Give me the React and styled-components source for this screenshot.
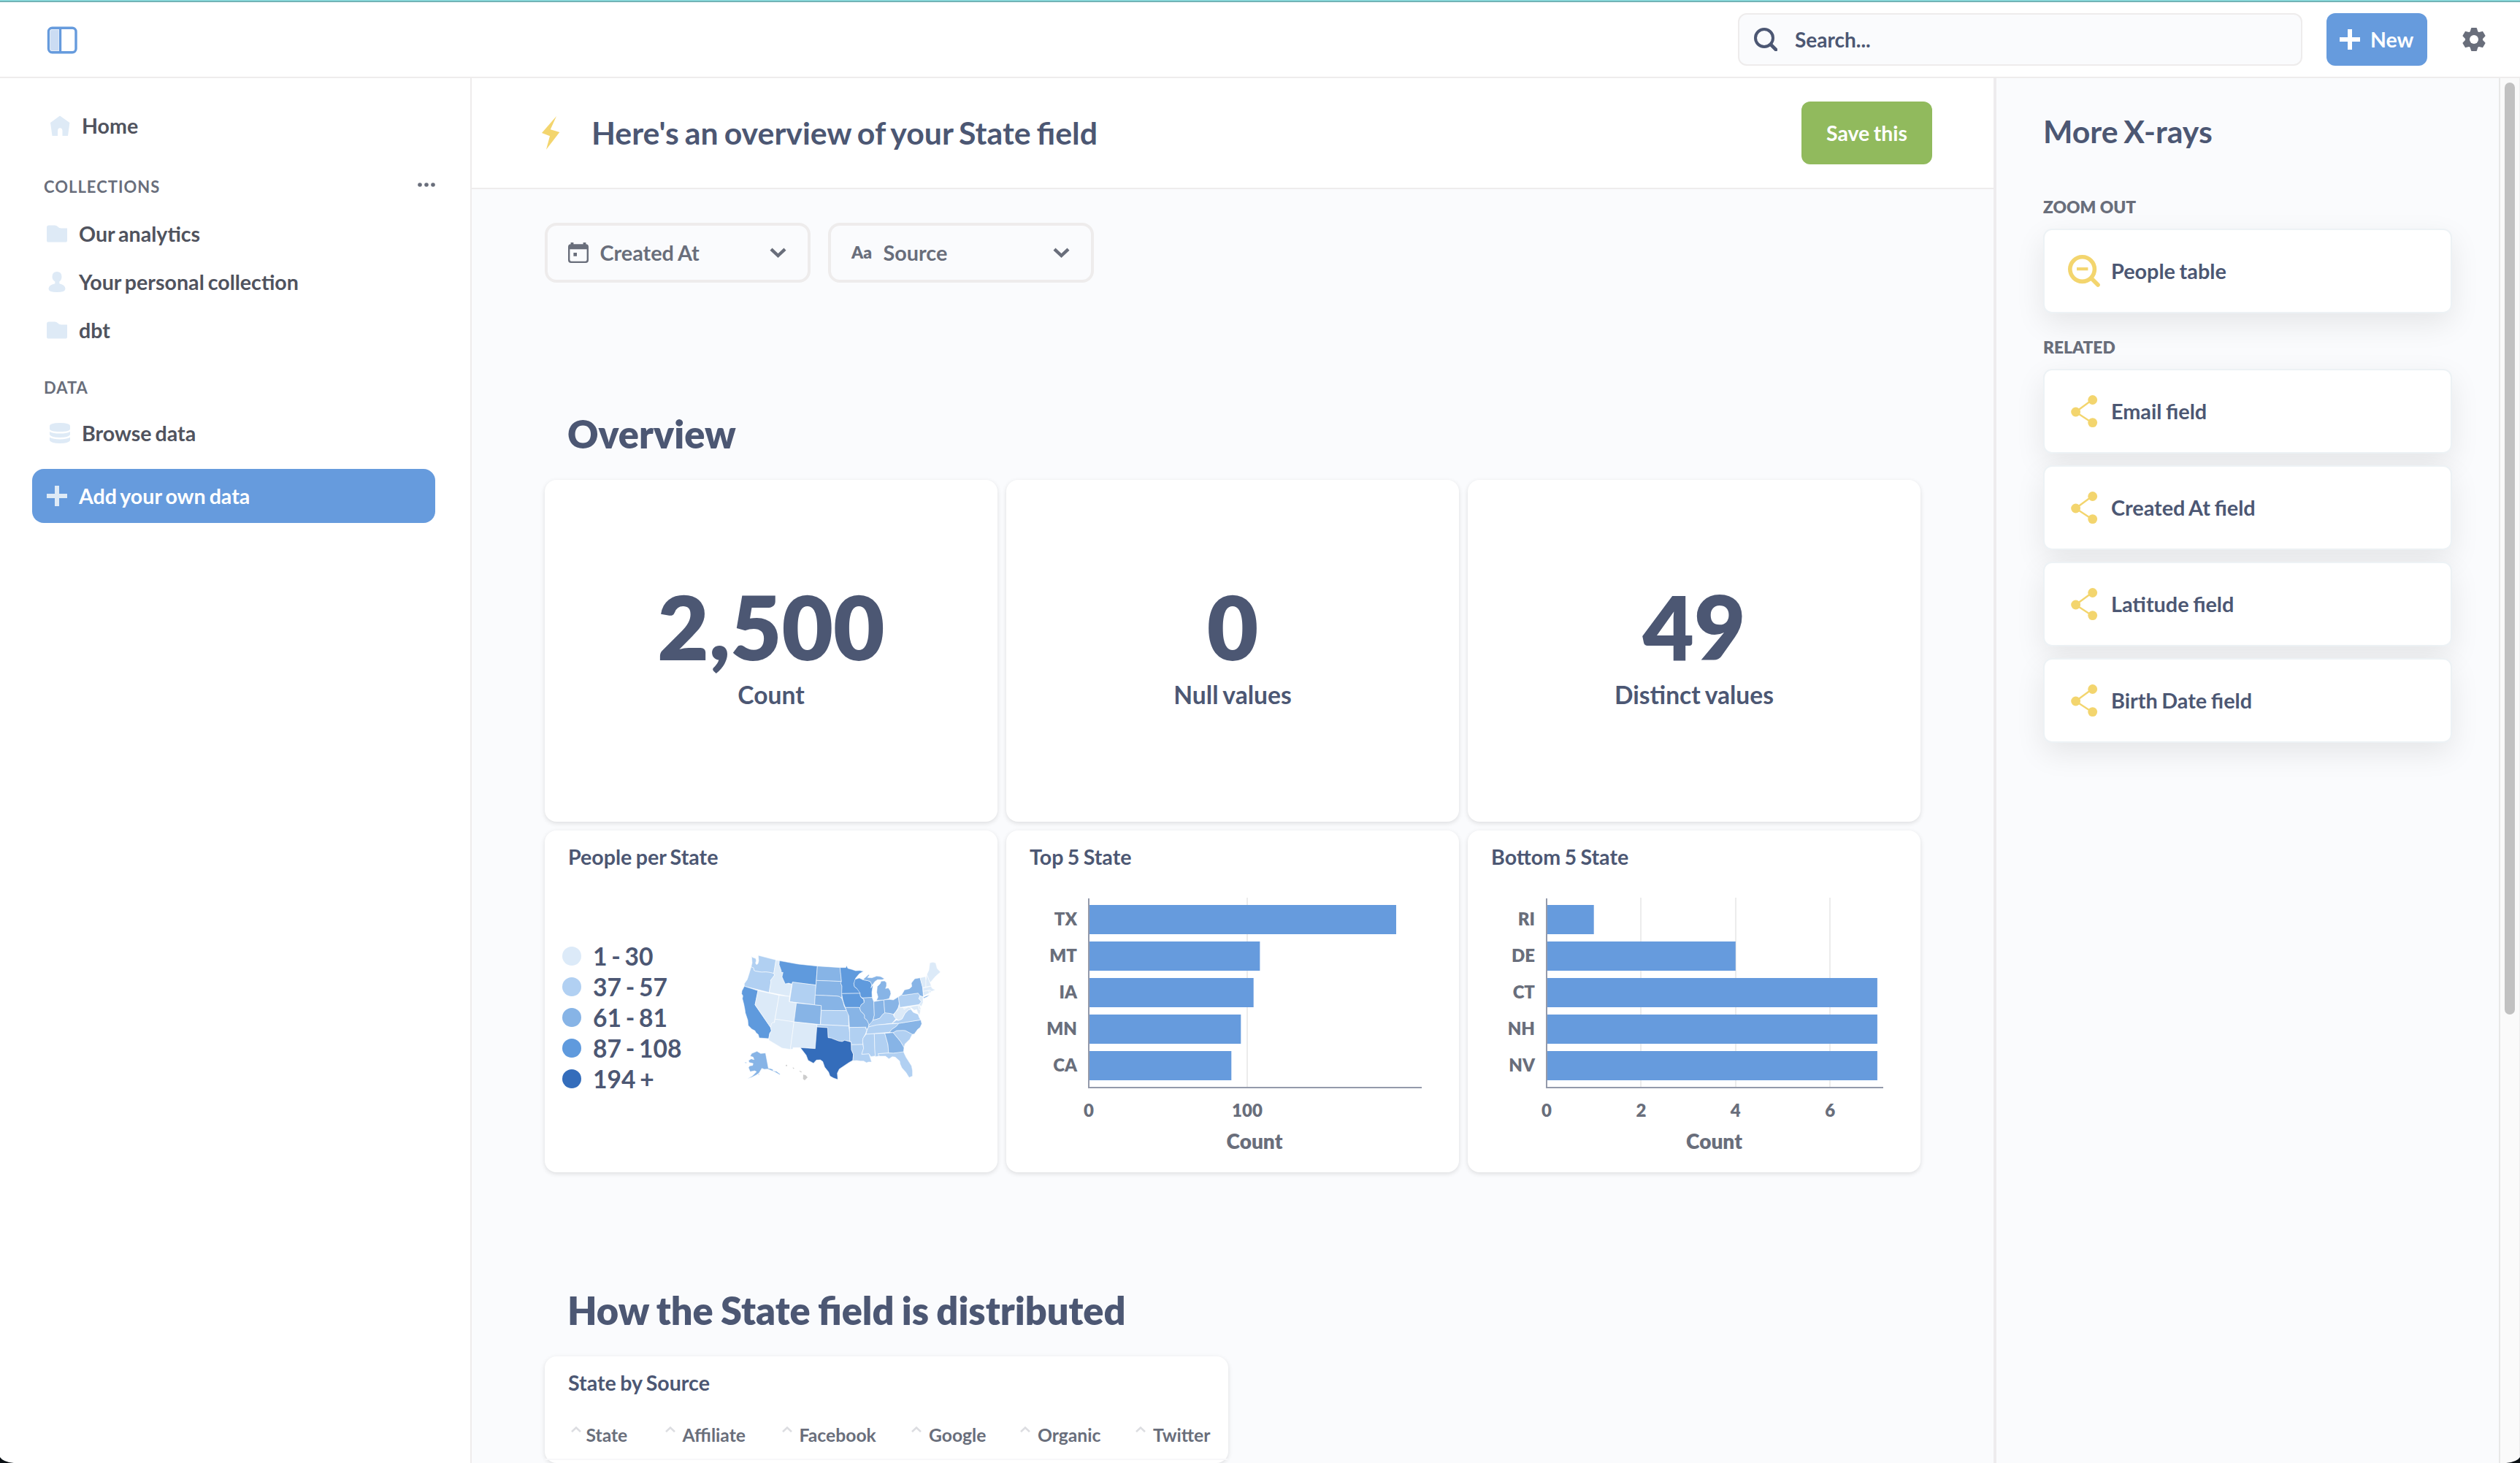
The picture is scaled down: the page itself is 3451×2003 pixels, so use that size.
import React from "react";
import styled, { createGlobalStyle } from "styled-components";

const color = {
  brand: "#669bdd",
  dark: "#4c5773",
  nav: "#50535e",
  medium: "#696e7b",
  pale: "#deeaf6",
  border: "#eeecec",
  bg: "#fafbfd",
  green: "#91ba5d",
  yellow: "#f3d56e",
  axis: "#949aab",
};

const GlobalStyle = createGlobalStyle`
  * { box-sizing: border-box; }
  html, body { margin: 0; height: 100%; overflow: hidden; background: #fff; }
  body { font-family: Lato, "Liberation Sans", sans-serif; font-size: 28px; font-weight: 700; color: ${color.dark}; }
  svg { display: block; flex: none; }
`;

/* ---------- shell ---------- */
const Page = styled.div`
  display: flex;
  flex-direction: column;
  height: 100vh;
`;
const TopStrip = styled.div`
  flex: none;
  height: 3px;
  border-top: 1px solid #8de5e6;
  background: #72b3b6;
`;
const AppBar = styled.header`
  flex: none;
  display: flex;
  align-items: center;
  justify-content: space-between;
  height: 104px;
  padding: 0 47px 0 64px;
  border-bottom: 2px solid ${color.border};
`;
const AppBarTools = styled.div`
  display: flex;
  align-items: center;
`;
const SearchBox = styled.div`
  display: flex;
  align-items: center;
  gap: 24px;
  width: 773px;
  height: 72px;
  padding: 0 20px 0 20px;
  border: 2px solid ${color.border};
  border-radius: 12px;
  background: ${color.bg};
  line-height: 34px;
`;
const NewButton = styled.button`
  display: flex;
  align-items: center;
  gap: 14px;
  width: 138px;
  height: 72px;
  margin: 0 48px 0 33px;
  padding: 0 0 0 18px;
  border: 0;
  border-radius: 12px;
  background: ${color.brand};
  color: #fff;
  font: inherit;
  font-size: 28.4px;
`;
const Body = styled.div`
  flex: 1;
  min-height: 0;
  display: flex;
`;

/* ---------- sidebar ---------- */
const Sidebar = styled.nav`
  flex: none;
  width: 646px;
  padding: 32px 48px 0 44px;
  border-right: 2px solid ${color.border};
  color: ${color.nav};
`;
const NavItem = styled.div`
  display: flex;
  align-items: center;
  gap: 16px;
  height: 66px;
  padding-left: ${(p) => (p.$root ? 24 : 20)}px;
  font-size: 28.6px;
  word-spacing: -2px;
`;
const NavHeading = styled.div`
  display: flex;
  align-items: center;
  justify-content: space-between;
  height: 28px;
  margin: ${(p) => p.$margin};
  padding-left: 16px;
  color: ${color.medium};
  font-size: 22px;
  letter-spacing: 1px;
  svg { margin-bottom: 4px; }
`;
const AddData = styled(NavItem)`
  height: 74px;
  width: 552px;
  margin-top: 16px;
  border-radius: 16px;
  background: ${color.brand};
  color: #fff;
`;

/* ---------- main ---------- */
const Main = styled.main`
  flex: none;
  width: 2084px;
  display: flex;
  flex-direction: column;
  background: ${color.bg};
`;
const XrayHeader = styled.div`
  flex: none;
  display: flex;
  align-items: center;
  height: 152px;
  padding: 0 84px 0 96px;
  border-bottom: 2px solid ${color.border};
  background: #fff;
`;
const Title = styled.h1`
  flex: 1;
  margin: 0 0 0 43px;
  padding-bottom: 2px;
  font-size: 42.8px;
  word-spacing: -2.4px;
  font-weight: 700;
`;
const SaveButton = styled.button`
  width: 179px;
  height: 86px;
  padding: 0;
  border: 0;
  border-radius: 12px;
  background: ${color.green};
  color: #fff;
  font: inherit;
  font-size: 28.4px;
  word-spacing: -1.5px;
`;
const Filters = styled.div`
  display: flex;
  gap: 24px;
  padding: 46px 0 0 100px;
`;
const Filter = styled.div`
  display: flex;
  align-items: center;
  width: 364px;
  height: 82px;
  padding: 0 29px 0 28px;
  border: 4px solid ${color.border};
  border-radius: 16px;
  color: ${color.medium};
  font-size: 28.8px;
  word-spacing: -1px;
  span { flex: 1; margin-left: 15.5px; }
`;
const TypeGlyph = styled.b`
  font-size: 22.8px;
  font-weight: 800;
  width: 28px;
  line-height: 24px;
  margin-bottom: 2px;
`;
const SectionTitle = styled.h2`
  margin: ${(p) => p.$top}px 0 0 131px;
  height: 64px;
  font-size: 52.3px;
  word-spacing: -1.8px;
  line-height: 64px;
  font-weight: 800;
`;
const CardGrid = styled.div`
  display: grid;
  grid-template-columns: repeat(3, 620px);
  grid-auto-rows: 468px;
  gap: 12px;
  margin: 31px 0 0 100px;
`;
const Card = styled.section`
  border-radius: 16px;
  background: #fff;
  box-shadow: 0 2px 6px rgba(0, 0, 0, 0.12);
`;
const CardTitle = styled.h3`
  margin: 0;
  padding: 16px 0 0 32px;
  font-size: 28.6px;
  word-spacing: -1.6px;
  line-height: 40px;
  font-weight: 700;
`;
const ScalarCard = styled(Card)`
  display: flex;
  flex-direction: column;
  align-items: center;
  padding-top: 139px;
`;
const ScalarValue = styled.div`
  font-size: 121.6px;
  line-height: 122px;
  font-weight: 800;
`;
const ScalarLabel = styled.div`
  margin-top: 13px;
  font-size: 33.6px;
  word-spacing: -1.5px;
  line-height: 40px;
`;
const MapBody = styled.div`
  display: flex;
  padding: 87px 0 0 24px;
`;
const Legend = styled.ul`
  width: 220px;
  margin: 8px 0 0;
  padding: 0;
  list-style: none;
  font-size: 33.6px;
  word-spacing: -2.4px;
`;
const LegendRow = styled.li`
  display: flex;
  align-items: center;
  gap: 16px;
  height: 42px;
  white-space: nowrap;
  &::before {
    content: "";
    width: 26px;
    height: 26px;
    border-radius: 50%;
    background: ${(p) => p.$fill};
  }
`;
const TableCard = styled(Card)`
  width: 936px;
  height: 600px;
  margin: 31px 0 0 100px;
`;
const HeaderRow = styled.div`
  display: grid;
  grid-template-columns: 128.5px 160px 177.5px 149px 158px 1fr;
  align-items: center;
  height: 68px;
  margin-top: 18px;
  padding-left: 36px;
  border-bottom: 2px solid #f7f7f9;
  color: ${color.medium};
  font-size: 24.7px;
`;
const HeaderCell = styled.div`
  display: flex;
  align-items: center;
  gap: ${(p) => p.$gap}px;
  svg { margin-bottom: 15px; }
`;

/* ---------- right panel ---------- */
const XrayPanel = styled.aside`
  flex: none;
  width: 692px;
  padding: 42px 64px 0;
  border-left: 4px solid #eeecee;
  background: ${color.bg};
`;
const PanelTitle = styled.h2`
  margin: 0;
  font-size: 42.8px;
  word-spacing: -2.6px;
  line-height: 62px;
  font-weight: 700;
`;
const PanelHeading = styled.h3`
  margin: ${(p) => p.$margin};
  color: ${color.medium};
  font-size: 22.75px;
  line-height: 28px;
  font-weight: 800;
`;
const XrayLink = styled.div`
  display: flex;
  align-items: center;
  gap: 15px;
  height: 116px;
  margin-bottom: 16px;
  padding-left: 32px;
  border: 2px solid #edf2f5;
  border-radius: 12px;
  background: #fff;
  box-shadow: 0 14px 40px rgba(0, 0, 0, 0.085);
  font-size: 28.8px;
  word-spacing: -1.4px;
`;
const ScrollTrack = styled.div`
  flex: 1;
  border-left: 2px solid #e8e8e8;
  border-right: 1px solid #ededed;
  background: #fafafa;
  padding: 6px 0 0 6px;
`;
const ScrollThumb = styled.div`
  width: 14px;
  height: 1276px;
  border-radius: 7px;
  background: #c1c1c1;
`;
const Corner = styled.svg`
  position: fixed;
  bottom: 0;
  ${(p) => (p.$right ? "right: 0; transform: scaleX(-1);" : "left: 0;")}
`;

/* ---------- icons ---------- */
const SidebarIcon = () => (
  <svg width="42" height="40" viewBox="0 -2 42 40">
    <rect x="2.5" y="2.2" width="37.5" height="33.6" rx="5" fill="#fff" stroke={color.brand} strokeWidth="3.4" />
    <path d="M8 4.6H16V33.4H8Q5 33.4 5 30.4V7.6Q5 4.600 8 4.600Z" fill="#cbdcf3" />
    <path d="M18.500 3V35" stroke={color.brand} strokeWidth="3.4" />
  </svg>
);
const SearchIcon = () => (
  <svg width="32" height="32" viewBox="0 0 32 32" fill="none" stroke={color.dark}>
    <circle cx="14" cy="14" r="12" strokeWidth="4" />
    <path d="M23 23L30 30" strokeWidth="4.600" strokeLinecap="round" />
  </svg>
);
const PlusIcon = ({ fill = "#fff" }) => (
  <svg width="28" height="28" viewBox="0 0 28 28" fill={fill}>
    <path d="M11 0h6v11h11v6H17v11h-6V17H0v-6h11z" />
  </svg>
);
const GearIcon = () => (
  <svg width="32" height="32" viewBox="-16 -16 32 32">
    <g fill={color.medium}>
      <circle r="12" />
      {[0, 60, 120, 180, 240, 300].map((a) => (
        <path key={a} transform={`rotate(${a})`} d="M-5.500 -10L-4 -15.200Q-3.900 -16 -3 -16H3Q3.900 -16 4 -15.200L5.500 -10Z" />
      ))}
    </g>
    <circle r="6" fill="#fff" />
  </svg>
);
const HomeIcon = () => (
  <svg width="28" height="28" viewBox="0 0 28 28" fill={color.pale}>
    <path d="M14 .4L27.400 10L25 28H17.500V21.500Q17.500 17.200 14.300 17.200Q11 17.200 11 21.500V28H3.500L1 10Z" />
  </svg>
);
const FolderIcon = () => (
  <svg width="28" height="28" viewBox="0 0 28 28" fill={color.pale}>
    <path d="M3 2.600H11Q13.500 2.600 15 4.200Q17 6.400 20 6.400H28V23Q28 25.600 25.500 25.600H2.500Q0 25.600 0 23V5.600Q0 2.600 3 2.600Z" />
  </svg>
);
const PersonIcon = () => (
  <svg width="28" height="28" viewBox="0 0 28 28" fill={color.pale}>
    <path d="M14 0Q20.500 0 20.500 7Q20.500 11 17.300 13.500V16.200Q25.500 18 25.500 23.500Q25.500 28 14 28Q2.500 28 2.500 23.500Q2.500 18 11.400 16.200V13.500Q7.500 11 7.500 7Q7.500 0 14 0Z" />
  </svg>
);
const DatabaseIcon = () => (
  <svg width="28" height="28" viewBox="0 0 28 28" fill={color.pale}>
    <path d="M0 4.500Q0 0 14 0Q28 0 28 4.500V8Q28 12 14 12Q0 12 0 8Z" />
    <path d="M0 12Q5 14.600 14 14.600Q23 14.600 28 12V16Q26 20 14 20Q2 20 0 16Z" />
    <path d="M0 19.800Q5 22.400 14 22.400Q23 22.400 28 19.800V24Q26 28 14 28Q2 28 0 24Z" />
  </svg>
);
const DotsIcon = () => (
  <svg width="24" height="6" viewBox="0 0 24 6" fill={color.medium}>
    <circle cx="3" cy="3" r="2.800" />
    <circle cx="12" cy="3" r="2.800" />
    <circle cx="21" cy="3" r="2.800" />
  </svg>
);
const BoltIcon = () => (
  <svg width="25" height="46" viewBox="0 0 25 46" fill={color.yellow}>
    <path d="M20 0L11.800 18.300L24.300 22L6 45.700L11 27.300L0 23Z" />
  </svg>
);
const CalendarIcon = () => (
  <svg width="28" height="28" viewBox="0 0 28 28">
    <path fillRule="evenodd" fill={color.medium} d="M3.600 0H7.400V2.200H20.600V0H24.400V2.200Q28 2.400 28 6V24Q28 28 24 28H4Q0 28 0 24V6Q0 2.400 3.600 2.200ZM2.400 9.200V23.600Q2.400 25.800 4.600 25.800H23.400Q25.600 25.800 25.600 23.600V9.200ZM7.400 14H12V18.800H7.400Z" />
  </svg>
);
const ChevronIcon = () => (
  <svg width="23" height="14" viewBox="0 0 23 14" fill="none" stroke={color.medium} strokeWidth="4.400">
    <path d="M2 2.200L11.500 11L21 2.200" />
  </svg>
);
const ZoomOutIcon = () => (
  <svg width="44" height="44" viewBox="0 0 44 44" fill="none" stroke={color.yellow}>
    <circle cx="19.600" cy="19.600" r="16.800" strokeWidth="5.600" />
    <path d="M12 19.200H27.400" strokeWidth="4.200" />
    <path d="M33.500 33.500L41 41" strokeWidth="5.600" strokeLinecap="round" />
  </svg>
);
const ShareIcon = () => (
  <svg width="44" height="44" viewBox="0 0 44 44" fill={color.yellow}>
    <path d="M33 6.500L10.500 23L33 37.800" fill="none" stroke={color.yellow} strokeWidth="2.400" />
    <circle cx="33.700" cy="6.500" r="6.400" />
    <circle cx="10.600" cy="23" r="6.400" />
    <circle cx="33.700" cy="37.600" r="6.400" />
  </svg>
);
const SortIcon = () => (
  <svg width="14" height="8" viewBox="0 0 14 8" fill="none" stroke="#dcdde1" strokeWidth="2.600">
    <path d="M1 7.200L7 1.600L13 7.200" />
  </svg>
);

/* ---------- choropleth ---------- */
const scale = ["#dceaf8", "#b1d0f2", "#87b4e6", "#5f9add", "#346dbb"];
const states = [
  [2, "118,88 122,92 135,97 137,106 134,116 138,122 144,118 147,106 145,84 218,103 209,158 192,154 175,152 160,153 134,149 128,146 126,136 116,131 120,115"],
  [2, "116,131 126,136 128,146 134,149 160,153 175,152 192,154 209,158 212,165 204,176 196,186 197,195 190,236 88,211 88,200 100,183 108,158"],
  [4, "88,211 144,229 132,287 196,380 199,394 192,405 188,426 149,423 145,409 136,402 132,394 118,386 104,372 102,350 92,320 90,305 86,285 80,262 82,250 77,242 78,230"],
  [1, "144,229 231,248 213,348 212,360 204,360 200,364 197,382 132,287"],
  [1, "218,103 232,106 231,122 240,148 239,153 247,154 243,168 248,184 256,199 283,202 274,253 190,236 197,195 196,186 204,176 212,165 209,158"],
  [4, "232,106 310,120 388,128 382,206 286,194 283,202 270,198 256,201 248,184 243,172 247,154 239,153 240,148 231,122"],
  [2, "286,194 382,206 377,287 274,274"],
  [1, "231,248 274,253 272,274 302,280 292,357 214,346"],
  [3, "302,280 404,290 400,368 292,357"],
  [1, "214,346 292,357 277,470 243,465 188,432 192,405 199,394 196,380 200,364 204,360 212,360"],
  [1, "292,357 387,368 379,467 320,463 288,463 288,469 277,470"],
  [3, "388,128 481,134 484,160 487,191 384,187"],
  [3, "384,187 487,191 485,200 489,210 489,240 488,260 478,253 466,251 379,247"],
  [3, "379,247 466,251 478,253 488,260 494,275 498,292 508,311 404,310 404,290 377,287"],
  [2, "404,310 508,311 515,320 516,332 517,374 401,368"],
  [2, "387,368 517,374 521,405 522,437 500,433 490,438 476,436 460,430 445,424 432,422 430,381 386,378"],
  [5, "386,378 430,381 432,422 445,424 460,430 476,436 490,438 500,433 527,440 528,472 536,490 534,515 518,524 500,536 478,551 470,568 472,594 455,588 440,580 434,563 418,543 410,520 400,513 384,514 372,527 350,515 342,494 318,463 379,467"],
  [4, "481,134 505,134 508,125 513,137 530,142 545,147 562,146 578,149 560,160 545,178 543,190 538,200 540,212 550,220 562,230 563,240 488,241 489,210 484,198 487,191"],
  [4, "488,241 563,240 566,255 578,265 580,278 568,287 566,296 562,300 558,298 503,298 498,285 492,265"],
  [3, "503,298 558,298 562,300 566,313 576,322 582,330 582,342 592,350 600,366 598,378 594,386 586,386 588,379 520,380 517,332 508,311"],
  [2, "520,380 588,379 586,386 592,388 586,406 576,424 574,436 575,450 528,451 526,438 521,437"],
  [2, "528,451 575,450 578,466 570,490 600,488 604,500 611,522 598,522 590,525 578,518 565,518 550,516 534,517 536,490 528,472"],
  [4, "543,182 560,177 575,184 596,188 606,192 612,204 608,218 617,204 612,235 613,257 573,259 565,252 563,238 550,220 540,212 538,200"],
  [3, "573,259 613,257 620,275 622,330 617,348 610,364 600,368 592,350 582,342 582,330 576,322 566,313 562,300 568,287 580,278 580,266"],
  [3, "620,274 661,267 665,320 655,328 645,342 630,347 617,350 622,330"],
  [3, "575,184 598,163 602,165 594,175 612,176 632,169 648,171 664,180 655,184 635,184 624,192 617,202 612,206 606,192 596,188"],
  [3, "631,269 637,255 632,236 634,212 646,200 650,190 664,189 672,196 672,210 668,220 680,218 688,230 690,242 683,262 661,267"],
  [3, "661,267 684,265 700,267 721,254 725,285 720,300 708,318 700,326 682,322 672,322 665,320"],
  [2, "617,350 630,347 645,342 655,328 665,320 682,322 700,326 702,334 712,343 695,363 632,370 598,378 600,370"],
  [2, "598,378 632,370 723,363 712,376 694,388 684,400 588,408 592,392"],
  [2, "588,408 622,406 624,470 626,497 608,500 600,488 570,490 578,466 574,436 576,424"],
  [2, "622,406 665,404 678,450 681,485 638,488 642,497 626,500 624,470"],
  [3, "665,404 699,401 710,414 730,438 744,462 742,482 700,486 681,485 678,450"],
  [2, "638,488 681,485 700,486 742,480 752,502 775,538 779,558 779,580 765,586 752,565 735,546 728,530 726,518 708,502 696,500 682,509 668,498 642,498"],
  [2, "699,401 714,393 740,392 750,393 778,408 768,428 748,448 744,462 730,438 710,414"],
  [3, "723,363 813,349 817,365 810,380 800,388 786,407 778,408 750,393 740,392 714,393 699,401 684,400 694,388 712,376"],
  [2, "695,363 712,350 722,351 736,345 748,322 762,308 772,305 782,318 802,326 806,338 812,349 723,363"],
  [1, "724,284 727,298 744,299 744,306 760,296 772,298 772,305 762,308 748,322 736,345 722,351 708,342 703,334 704,322 718,308"],
  [1, "744,299 803,289 806,306 812,308 808,330 800,318 796,306 786,310 772,298 760,296 744,306"],
  [2, "721,254 735,245 738,248 802,239 810,248 805,262 816,274 806,286 727,298"],
  [3, "735,245 746,226 766,221 776,212 774,198 788,180 810,176 820,212 823,248 822,254 810,250 802,239 738,248"],
  [3, "822,257 834,251 850,246 838,255 826,260"],
  [1, "810,250 822,256 822,278 815,294 806,286 816,274 805,262"],
  [1, "803,289 807,288 814,306 806,306"],
  [1, "810,176 832,171 834,186 834,214 821,217"],
  [1, "838,162 856,209 834,214 834,186"],
  [1, "838,162 846,145 850,115 862,112 874,115 880,138 894,152 872,172 860,186 852,196 846,184"],
  [1, "822,218 855,211 860,220 873,226 858,232 848,227 823,232"],
  [1, "823,232 846,228 848,239 825,250"],
  [1, "846,228 852,227 856,234 848,239"],
  [3, "140,478 155,487 175,485 187,548 196,549 206,553 206,558 220,560 236,572 232,574 214,563 196,556 184,551 170,552 160,548 154,558 148,568 136,576 120,584 100,591 122,578 138,562 130,558 112,562 105,545 110,538 122,536 124,528 108,524 105,516 116,509 128,512 124,502 112,498 118,487"],
  [3, "144,572 150,570 148,577"],
  [3, "88,524 96,522 97,528"],
];
const UsMap = () => (
  <svg width="320" height="220" viewBox="0 0 960 660">
    <g stroke="#fff" strokeOpacity=".75" strokeWidth="2.200" strokeLinejoin="round">
      {states.map(([level, points], i) => (
        <polygon key={i} points={points} fill={scale[level - 1]} />
      ))}
    </g>
    <g fill="#cccccc">
      <polygon points="330,574 340,576 348,585 336,597 329,592" />
      <polygon points="314,557 324,562 322,565 316,562" />
      <polygon points="287,543 294,549 288,550" />
      <circle cx="261" cy="536" r="3" />
    </g>
  </svg>
);

/* ---------- bar charts ---------- */
const ChartText = styled.text`
  fill: ${color.medium};
  font-size: ${(p) => p.$size || 24}px;
  font-weight: 800;
  text-anchor: ${(p) => p.$anchor || "middle"};
`;
const BarChart = ({ x0, x1, unit, ticks, rows }) => (
  <svg width="620" height="412" viewBox="0 56 620 412">
    {ticks.slice(1).map((t) => (
      <rect key={t} x={Math.round(x0 + t * unit) - 1} y="92" width="2" height="259" fill="#ececec" />
    ))}
    {rows.map(([label, value], i) => (
      <React.Fragment key={label}>
        <rect x={x0} y={102 + i * 50} width={value * unit} height="40" fill={color.brand} />
        <ChartText $anchor="end" x={x0 - 16} y={130 + i * 50}>{label}</ChartText>
      </React.Fragment>
    ))}
    <path d={`M${x0} 93V352H${x1}`} fill="none" stroke={color.axis} strokeWidth="2" />
    {ticks.map((t) => (
      <ChartText key={t} x={x0 + t * unit} y="392">{t}</ChartText>
    ))}
    <ChartText $size={28} x={(x0 + x1) / 2 - 1} y="436">Count</ChartText>
  </svg>
);

const scalars = [["2,500", "Count"], ["0", "Null values"], ["49", "Distinct values"]];
const legend = ["1 - 30", "37 - 57", "61 - 81", "87 - 108", "194 +"];
const related = ["Email field", "Created At field", "Latitude field", "Birth Date field"];
const columns = ["State", "Affiliate", "Facebook", "Google", "Organic", "Twitter"];

export default function App() {
  return (
    <Page>
      <GlobalStyle />
      <TopStrip />
      <AppBar>
        <SidebarIcon />
        <AppBarTools>
          <SearchBox>
            <SearchIcon />
            <span>Search...</span>
          </SearchBox>
          <NewButton>
            <PlusIcon />
            New
          </NewButton>
          <GearIcon />
        </AppBarTools>
      </AppBar>
      <Body>
        <Sidebar>
          <NavItem $root><HomeIcon />Home</NavItem>
          <NavHeading $margin="36px 0 18px">COLLECTIONS<DotsIcon /></NavHeading>
          <NavItem><FolderIcon />Our analytics</NavItem>
          <NavItem><PersonIcon />Your personal collection</NavItem>
          <NavItem><FolderIcon />dbt</NavItem>
          <NavHeading $margin="31px 0 16px">DATA</NavHeading>
          <NavItem $root><DatabaseIcon />Browse data</NavItem>
          <AddData><PlusIcon fill="#deeaf6" />Add your own data</AddData>
        </Sidebar>
        <Main>
          <XrayHeader>
            <BoltIcon />
            <Title>Here's an overview of your State field</Title>
            <SaveButton>Save this</SaveButton>
          </XrayHeader>
          <Filters>
            <Filter><CalendarIcon /><span>Created At</span><ChevronIcon /></Filter>
            <Filter><TypeGlyph>Aa</TypeGlyph><span>Source</span><ChevronIcon /></Filter>
          </Filters>
          <SectionTitle $top={175}>Overview</SectionTitle>
          <CardGrid>
            {scalars.map(([value, label]) => (
              <ScalarCard key={label}>
                <ScalarValue>{value}</ScalarValue>
                <ScalarLabel>{label}</ScalarLabel>
              </ScalarCard>
            ))}
            <Card>
              <CardTitle>People per State</CardTitle>
              <MapBody>
                <Legend>
                  {legend.map((text, i) => (
                    <LegendRow key={text} $fill={scale[i]}>{text}</LegendRow>
                  ))}
                </Legend>
                <UsMap />
              </MapBody>
            </Card>
            <Card>
              <CardTitle>Top 5 State</CardTitle>
              <BarChart x0={113} x1={569} unit={2.17} ticks={[0, 100]}
                rows={[["TX", 194], ["MT", 108], ["IA", 104], ["MN", 96], ["CA", 90]]} />
            </Card>
            <Card>
              <CardTitle>Bottom 5 State</CardTitle>
              <BarChart x0={108} x1={569} unit={64.7} ticks={[0, 2, 4, 6]}
                rows={[["RI", 1], ["DE", 4], ["CT", 7], ["NH", 7], ["NV", 7]]} />
            </Card>
          </CardGrid>
          <SectionTitle $top={157}>How the State field is distributed</SectionTitle>
          <TableCard>
            <CardTitle>State by Source</CardTitle>
            <HeaderRow>
              {columns.map((name, i) => (
                <HeaderCell key={name} $gap={i ? 10 : 6.500}><SortIcon />{name}</HeaderCell>
              ))}
            </HeaderRow>
          </TableCard>
        </Main>
        <XrayPanel>
          <PanelTitle>More X-rays</PanelTitle>
          <PanelHeading $margin="59px 0 15px">ZOOM OUT</PanelHeading>
          <XrayLink><ZoomOutIcon />People table</XrayLink>
          <PanelHeading $margin="33px 0 15px">RELATED</PanelHeading>
          {related.map((name) => (
            <XrayLink key={name}><ShareIcon />{name}</XrayLink>
          ))}
        </XrayPanel>
        <ScrollTrack><ScrollThumb /></ScrollTrack>
      </Body>
      <Corner width="19" height="8" viewBox="0 0 19 8"><path d="M0 0Q4 6.500 19 8H0Z" fill="#0a1014" /></Corner>
      <Corner $right width="19" height="8" viewBox="0 0 19 8"><path d="M0 0Q4 6.500 19 8H0Z" fill="#0a1014" /></Corner>
    </Page>
  );
}
